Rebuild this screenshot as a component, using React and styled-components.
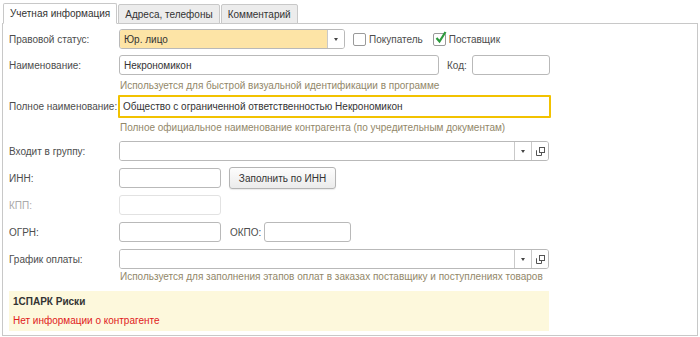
import React from "react";
import styled, { createGlobalStyle } from "styled-components";

const GlobalStyle = createGlobalStyle`
  html, body { margin: 0; padding: 0; background: #fff; }
  body { font-family: "Liberation Sans", Arial, sans-serif; font-size: 10px; color: #4d4d4d; }
`;

const Page = styled.div`
  width: 700px;
  height: 337px;
  padding: 2px 2px 1px 2px;
  box-sizing: border-box;
  display: flex;
  flex-direction: column;
`;

const TabBar = styled.div`
  display: flex;
  align-items: flex-end;
  padding-left: 1px;
  height: 21px;
  gap: 1px;
`;

const Tab = styled.div`
  height: ${(p) => (p.$active ? "21px" : "20px")};
  padding: 0 6px;
  box-sizing: border-box;
  display: flex;
  align-items: center;
  border: 1px solid #c8c8c8;
  border-bottom: ${(p) => (p.$active ? "1px solid #fff" : "1px solid #c8c8c8")};
  border-radius: 2px 2px 0 0;
  background: ${(p) => (p.$active ? "#fff" : "#ececec")};
  color: #333;
  margin-bottom: -1px;
  position: relative;
  z-index: ${(p) => (p.$active ? 1 : 0)};
`;

const Panel = styled.div`
  flex: 1;
  border: 1px solid #c8c8c8;
  padding: 5px 6px 0 6px;
  display: flex;
  flex-direction: column;
`;

const Row = styled.div`
  display: flex;
  align-items: center;
  height: ${(p) => p.$h || 20}px;
  margin-top: ${(p) => p.$mt || 0}px;
`;

const Label = styled.div`
  width: ${(p) => p.$w || 110}px;
  margin-left: ${(p) => p.$ml || 0}px;
  flex: none;
  color: ${(p) => (p.$disabled ? "#aaa" : "#4d4d4d")};
  white-space: nowrap;
`;

const Field = styled.div`
  width: ${(p) => p.$w}px;
  height: ${(p) => p.$h || 20}px;
  box-sizing: border-box;
  border: ${(p) => (p.$focus ? "2px solid #f2c200" : p.$disabled ? "1px solid #e2e2e2" : "1px solid #b9b9b9")};
  border-radius: ${(p) => (p.$focus ? "1px" : "3px")};
  background: #fff;
  display: flex;
  align-items: center;
  padding-left: ${(p) => (p.$focus ? 3 : 4)}px;
  color: #333;
  white-space: nowrap;
  flex: none;
`;

const Combo = styled.div`
  width: ${(p) => p.$w}px;
  height: 20px;
  box-sizing: border-box;
  border: 1px solid #b9b9b9;
  border-radius: 3px;
  display: flex;
  overflow: hidden;
  flex: none;
`;

const ComboText = styled.div`
  flex: 1;
  background: ${(p) => p.$bg || "#fff"};
  display: flex;
  align-items: center;
  padding-left: 4px;
  color: #333;
`;

const ComboBtn = styled.div`
  width: 16px;
  flex: none;
  border-left: 1px solid #c9c9c9;
  background: #fff;
  display: flex;
  align-items: center;
  justify-content: center;
`;

const Arrow = styled.div`
  width: 0;
  height: 0;
  border-left: 2.5px solid transparent;
  border-right: 2.5px solid transparent;
  border-top: 3px solid #444;
`;

const Hint = styled.div`
  margin-left: 111px;
  color: #928769;
  height: 14px;
  line-height: 14px;
  margin-top: ${(p) => p.$mt || 0}px;
  white-space: nowrap;
`;

const Check = styled.label`
  display: flex;
  align-items: center;
  gap: 3px;
  margin-left: ${(p) => p.$ml}px;
  color: #4d4d4d;
`;

const Box = styled.span`
  width: 13px;
  height: 13px;
  box-sizing: border-box;
  border: 1px solid #9a9a9a;
  border-radius: 2px;
  background: #fff;
  position: relative;
  flex: none;
`;

const Tick = styled.svg`
  position: absolute;
  left: 1px;
  top: -3px;
`;

const Button = styled.div`
  height: 22px;
  width: 107px;
  margin-left: 8px;
  box-sizing: border-box;
  border: 1px solid #b4b4b4;
  border-radius: 3px;
  background: linear-gradient(#fdfdfd, #ebebeb);
  display: flex;
  align-items: center;
  justify-content: center;
  color: #333;
  box-shadow: 0 1px 1px rgba(0, 0, 0, 0.08);
`;

const Spark = styled.div`
  width: 540px;
  height: 40px;
  margin-top: 7px;
  background: #fdf8dc;
  padding: 3px 4px 0 4px;
  box-sizing: border-box;
`;

const SparkTitle = styled.div`
  font-weight: bold;
  color: #333;
  line-height: 15px;
`;

const SparkWarn = styled.div`
  color: #e0201b;
  line-height: 15px;
  margin-top: 4px;
`;

const OpenIcon = () => (
  <svg width="9" height="9" viewBox="0 0 9 9">
    <rect x="3.5" y="0.5" width="5" height="5" fill="none" stroke="#555" />
    <path d="M1 3.5 H0.5 V8.5 H5.5 V6" fill="none" stroke="#555" />
  </svg>
);

const SelectOpen = ({ w }) => (
  <Combo $w={w}>
    <ComboText />
    <ComboBtn>
      <Arrow />
    </ComboBtn>
    <ComboBtn>
      <OpenIcon />
    </ComboBtn>
  </Combo>
);

export default function App() {
  return (
    <Page>
      <GlobalStyle />
      <TabBar>
        <Tab $active>Учетная информация</Tab>
        <Tab>Адреса, телефоны</Tab>
        <Tab>Комментарий</Tab>
      </TabBar>
      <Panel>
        <Row>
          <Label>Правовой статус:</Label>
          <Combo $w={226}>
            <ComboText $bg="#fde4a6">Юр. лицо</ComboText>
            <ComboBtn>
              <Arrow />
            </ComboBtn>
          </Combo>
          <Check $ml={8}>
            <Box />
            Покупатель
          </Check>
          <Check $ml={10}>
            <Box>
              <Tick width="12" height="13" viewBox="0 0 12 13">
                <path d="M1.5 7 L4.5 10.5 L10.5 1" fill="none" stroke="#2c9a3c" strokeWidth="2.2" />
              </Tick>
            </Box>
            Поставщик
          </Check>
        </Row>
        <Row $mt={6}>
          <Label>Наименование:</Label>
          <Field $w={320}>Некрономикон</Field>
          <Label $w={25} $ml={8}>Код:</Label>
          <Field $w={78} />
        </Row>
        <Hint $mt={4}>Используется для быстрой визуальной идентификации в программе</Hint>
        <Row $h={23} $mt={2}>
          <Label $w={109}>Полное наименование:</Label>
          <Field $w={433} $h={23} $focus>
            Общество с ограниченной ответственностью Некрономикон
          </Field>
        </Row>
        <Hint $mt={3}>Полное официальное наименование контрагента (по учредительным документам)</Hint>
        <Row $mt={6}>
          <Label>Входит в группу:</Label>
          <SelectOpen w={430} />
        </Row>
        <Row $mt={7}>
          <Label>ИНН:</Label>
          <Field $w={102} />
          <Button>Заполнить по ИНН</Button>
        </Row>
        <Row $mt={7}>
          <Label $disabled>КПП:</Label>
          <Field $w={102} $disabled />
        </Row>
        <Row $mt={7}>
          <Label>ОГРН:</Label>
          <Field $w={102} />
          <Label $w={34} $ml={9}>ОКПО:</Label>
          <Field $w={87} />
        </Row>
        <Row $mt={7}>
          <Label>График оплаты:</Label>
          <SelectOpen w={430} />
        </Row>
        <Hint $mt={1}>Используется для заполнения этапов оплат в заказах поставщику и поступлениях товаров</Hint>
        <Spark>
          <SparkTitle>1СПАРК Риски</SparkTitle>
          <SparkWarn>Нет информации о контрагенте</SparkWarn>
        </Spark>
      </Panel>
    </Page>
  );
}
